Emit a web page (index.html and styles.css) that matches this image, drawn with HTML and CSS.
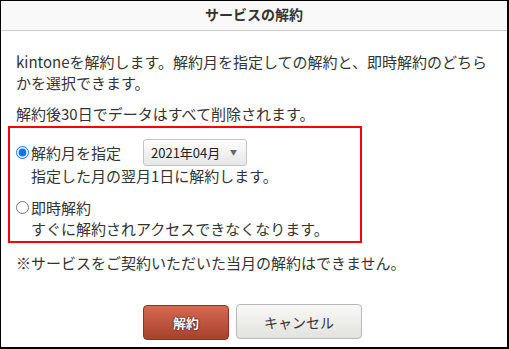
FILE: index.html
```html
<!DOCTYPE html>
<html lang="ja">
<head>
<meta charset="utf-8">
<link rel="stylesheet" href="styles.css">
</head>
<body>
<div class="dialog">
  <div class="header">サービスの解約</div>
  <div class="content">
    <p class="intro">kintoneを解約します。解約月を指定しての解約と、即時解約のどちらかを選択できます。</p>
    <p class="notice">解約後30日でデータはすべて削除されます。</p>
    <div class="options">
      <div class="row">
        <label class="choice"><input type="radio" name="mode" checked><span class="label-text">解約月を指定</span></label>
        <div class="select"><span>2021年04月</span><span class="arrow">▼</span></div>
      </div>
      <div class="desc">指定した月の翌月1日に解約します。</div>
      <div class="row row-second">
        <label class="choice"><input type="radio" name="mode"><span class="label-text">即時解約</span></label>
      </div>
      <div class="desc">すぐに解約されアクセスできなくなります。</div>
    </div>
    <p class="note">※サービスをご契約いただいた当月の解約はできません。</p>
    <div class="actions">
      <button class="btn btn-danger">解約</button>
      <button class="btn btn-cancel">キャンセル</button>
    </div>
  </div>
</div>
</body>
</html>
```
FILE: styles.css
```css
html, body {
  margin: 0;
  padding: 0;
  background: #fff;
}
.dialog {
  width: 509px;
  height: 349px;
  box-sizing: border-box;
  border: 1px solid #000;
  border-right-width: 2px;
  border-bottom-width: 2px;
  background: #fff;
  font-family: "Noto Sans CJK JP", "Noto Sans", sans-serif;
  color: #333;
  overflow: hidden;
}
.header {
  height: 29px;
  line-height: 26px;
  border-bottom: 1px solid #ccc;
  background: #f9f9f9;
  text-align: center;
  font-size: 14px;
  font-weight: bold;
  color: #333;
}
.content {
  padding: 20px 6px 0 15px;
  font-size: 15px;
  line-height: 21px;
}
p {
  margin: 0;
}
.intro {
  margin-bottom: 10px;
}
.notice {
  margin-bottom: 2px;
}
.options {
  margin-left: -8px;
  width: 354px;
  box-sizing: border-box;
  border: 2px solid #f00;
  padding: 11px 0 2px 0;
}
.row {
  display: flex;
  align-items: center;
  height: 26px;
}
.row-second {
  margin-top: 11px;
  height: 21px;
}
.choice {
  display: flex;
  align-items: center;
  width: 133px;
}
.choice input {
  margin: 0 2px 0 6px;
  width: 13px;
  height: 13px;
  accent-color: #0b75ef;
}
.label-text {
  line-height: 21px;
}
.select {
  width: 104px;
  height: 27px;
  box-sizing: border-box;
  border: 1px solid #c4c4c4;
  border-radius: 3px;
  background: linear-gradient(#fdfdfd, #e6e6e6);
  display: flex;
  align-items: center;
  justify-content: space-between;
  padding: 0 9px 0 7px;
  font-size: 13px;
  color: #222;
}
.arrow {
  font-size: 7px;
  color: #666;
}
.desc {
  padding-left: 21px;
}
.note {
  margin-top: 9px;
}
.actions {
  display: flex;
  gap: 7px;
  margin-top: 31px;
  padding-left: 127px;
}
.btn {
  height: 35px;
  box-sizing: border-box;
  border-radius: 4px;
  font-family: "Noto Sans CJK JP", sans-serif;
  font-size: 13px;
  font-weight: bold;
  cursor: pointer;
  padding: 0;
}
.btn-danger {
  width: 86px;
  margin-top: 1px;
  border: 1px solid #8d3323;
  background: linear-gradient(#d66a52, #a6412d);
  color: #fff;
  text-shadow: 0 0 2px #4a1208, 0 0 1px #4a1208;
}
.btn-cancel {
  width: 126px;
  border: 1px solid #b8b8b8;
  background: linear-gradient(#f8f8f6, #e2e2de);
  color: #333;
  font-size: 14px;
  font-weight: normal;
}
```
